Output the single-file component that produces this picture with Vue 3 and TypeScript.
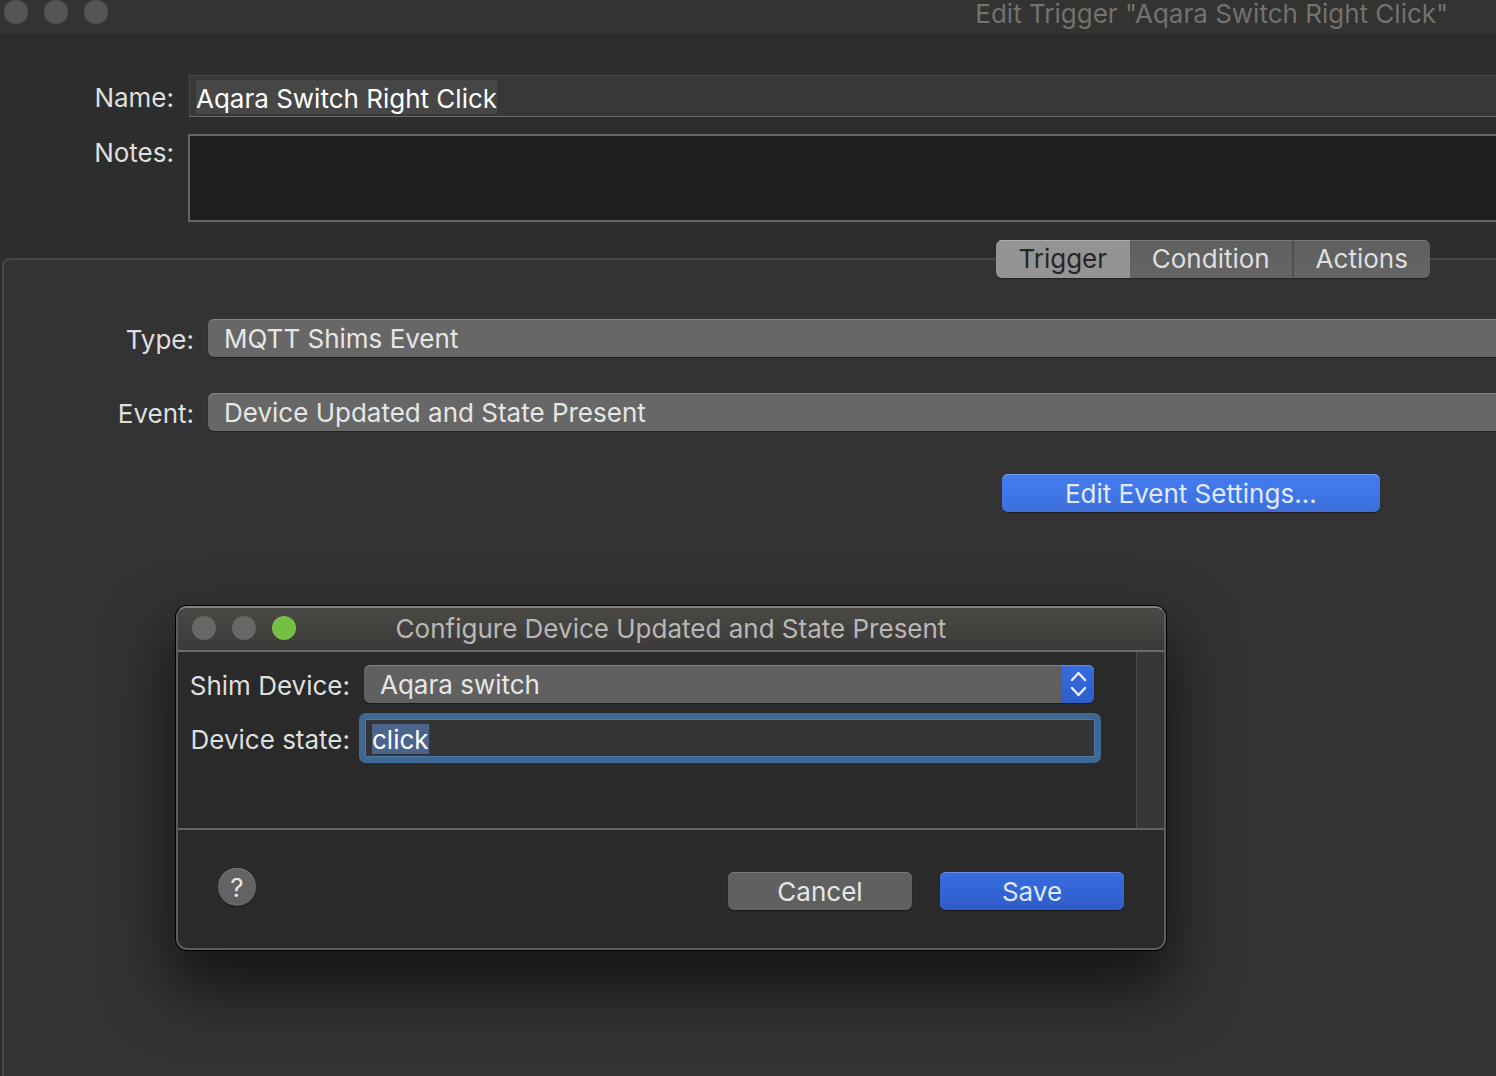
<script setup lang="ts">
import { ref } from 'vue'

type Tab = 'Trigger' | 'Condition' | 'Actions'

const tabs: Tab[] = ['Trigger', 'Condition', 'Actions']
const activeTab = ref<Tab>('Trigger')

const name = ref('Aqara Switch Right Click')
const notes = ref('')
const triggerType = ref('MQTT Shims Event')
const eventKind = ref('Device Updated and State Present')
const shimDevice = ref('Aqara switch')
const deviceState = ref('click')
</script>

<template>
  <div class="desktop">
    <main class="window">
      <header class="titlebar">
        <div class="lights">
          <span class="light"></span>
          <span class="light"></span>
          <span class="light"></span>
        </div>
        <h1 class="title">Edit Trigger "Aqara Switch Right Click"</h1>
      </header>

      <div class="general">
        <div class="general-row">
          <label class="label" for="name">Name:</label>
          <div class="name-field">
            <input id="name" v-model="name" class="marked" type="text" autocomplete="off" />
          </div>
        </div>
        <div class="general-row top">
          <label class="label" for="notes">Notes:</label>
          <textarea id="notes" v-model="notes" class="notes"></textarea>
        </div>
      </div>

      <div class="tabs" role="tablist">
        <button
          v-for="tab in tabs"
          :key="tab"
          type="button"
          role="tab"
          class="tab"
          :class="{ active: tab === activeTab }"
          :aria-selected="tab === activeTab"
          @click="activeTab = tab"
        >
          {{ tab }}
        </button>
      </div>

      <section class="group">
        <div class="group-row">
          <label class="label" for="type">Type:</label>
          <select id="type" v-model="triggerType" class="popup">
            <option>MQTT Shims Event</option>
          </select>
        </div>
        <div class="group-row">
          <label class="label" for="event">Event:</label>
          <select id="event" v-model="eventKind" class="popup">
            <option>Device Updated and State Present</option>
          </select>
        </div>
        <button type="button" class="button settings">Edit Event Settings...</button>
      </section>
    </main>

    <div class="dialog" role="dialog" aria-labelledby="dialog-title">
      <header class="dialog-bar">
        <div class="lights">
          <span class="light"></span>
          <span class="light"></span>
          <span class="light green"></span>
        </div>
        <h2 id="dialog-title" class="title">Configure Device Updated and State Present</h2>
      </header>

      <div class="dialog-body">
        <div class="fields">
          <div class="field-row">
            <label class="label" for="device">Shim Device:</label>
            <div class="picker">
              <select id="device" v-model="shimDevice" class="popup">
                <option>Aqara switch</option>
              </select>
              <svg class="stepper" viewBox="0 0 32 38" aria-hidden="true">
                <path d="M10 15 16.500 8 23 15M10 23 16.500 30 23 23" />
              </svg>
            </div>
          </div>
          <div class="field-row">
            <label class="label" for="state">Device state:</label>
            <div class="state-field">
              <input id="state" v-model="deviceState" class="marked" type="text" autocomplete="off" />
            </div>
          </div>
        </div>
        <div class="scroll-track"></div>
      </div>

      <footer class="dialog-footer">
        <button type="button" class="help" aria-label="Help">?</button>
        <div class="dialog-actions">
          <button type="button" class="button cancel">Cancel</button>
          <button type="button" class="button save">Save</button>
        </div>
      </footer>
    </div>
  </div>
</template>

<style>
body {
  background: #2d2d2d;
}
</style>

<style scoped>
* {
  box-sizing: border-box;
}

.desktop {
  position: relative;
  min-height: 100vh;
  overflow: hidden;
  display: flex;
  font-family: Inter, 'Liberation Sans', sans-serif;
  font-size: 26px;
  line-height: 30px;
  color: #dfdfdf;
}

button,
input,
select,
textarea {
  margin: 0;
  border: 0;
  padding: 0;
  font: inherit;
  color: inherit;
  outline: none;
}

/* The trigger window runs past the right edge of the screen. */
.window {
  flex: none;
  width: 162vw;
  display: flex;
  flex-direction: column;
  background: #2d2d2d;
}

.titlebar {
  position: relative;
  height: 34px;
  display: flex;
  justify-content: center;
  background: #333331;
  color: #72726f;
}

.title {
  margin: 0;
  font-size: 26px;
  line-height: 28px;
  font-weight: 400;
}

.lights {
  position: absolute;
  left: 4px;
  top: 0;
  display: flex;
  gap: 16px;
}

.light {
  width: 24px;
  height: 24px;
  border-radius: 50%;
  background: #555553;
}

.general {
  display: flex;
  flex-direction: column;
  gap: 17px;
  padding: 41px 40px 18px 0;
}

.general-row {
  display: flex;
  align-items: center;
}

.general-row.top {
  align-items: flex-start;
}

.label {
  padding-top: 4px;
  text-align: right;
}

.general .label {
  width: 188px;
  padding-right: 14px;
}

.name-field {
  flex: 1;
  height: 42px;
  display: flex;
  align-items: center;
  margin-left: 1px;
  padding: 2px 6px 0;
  border: 1px solid #484848;
  border-bottom-color: #6c6c6c;
  background: #383838;
}

.marked {
  field-sizing: content;
  padding-top: 2px;
  color: #fff;
}

.name-field .marked {
  height: 34px;
  background: #464646;
}

.notes {
  flex: 1;
  height: 88px;
  border: 2px solid #646464;
  background: #1e1e1e;
  resize: none;
}

.tabs {
  position: relative;
  z-index: 1;
  align-self: center;
  height: 38px;
  display: flex;
  margin-left: 2px;
  border-radius: 6px;
  overflow: hidden;
  box-shadow: 0 1px 1px rgba(0, 0, 0, 0.3);
}

.tab {
  width: 136px;
  background: linear-gradient(#5f5f5f, #656565);
  box-shadow: inset 0 1px #7b7b7b;
}

.tab:first-child {
  width: 134px;
}

.tab:nth-child(2) {
  width: 164px;
  border-right: 2px solid #505050;
}

.tab.active {
  background: #949494;
  box-shadow: inset 0 1px #acacac;
  color: #262626;
}

.group {
  flex: 1;
  display: flex;
  flex-direction: column;
  gap: 36px;
  margin: -20px 0 0 2px;
  padding: 59px 44px 0 0;
  border: 2px solid #464646;
  border-bottom: 0;
  border-radius: 8px 8px 0 0;
  background: #333;
}

.group-row {
  display: flex;
  align-items: center;
}

.group .label {
  width: 204px;
  padding-right: 14px;
}

.popup {
  appearance: none;
  flex: 1;
  height: 38px;
  padding: 2px 16px 0;
  border-radius: 6px;
  background: #676767;
  box-shadow:
    inset 0 1px #838383,
    0 1px 1px rgba(0, 0, 0, 0.4);
  color: #e6e6e6;
}

.button {
  width: 184px;
  height: 38px;
  padding-top: 2px;
  border-radius: 6px;
  color: #e6e6e6;
}

.settings {
  align-self: center;
  width: 378px;
  margin-top: 7px;
  background: linear-gradient(#447df0, #3c6fdc);
  box-shadow:
    inset 0 1px #6f9bf2,
    0 1px 1px rgba(0, 0, 0, 0.4);
  color: #e1e9fb;
}

.dialog {
  position: absolute;
  z-index: 2;
  left: 176px;
  top: 606px;
  width: 990px;
  border: 2px solid #5c5c5c;
  border-top-color: #858482;
  border-radius: 11px;
  background: #2a2a2a;
  box-shadow:
    0 0 0 1px #000,
    0 32px 64px 6px rgba(0, 0, 0, 0.6);
}

.dialog-bar {
  position: relative;
  height: 44px;
  display: flex;
  justify-content: center;
  align-items: center;
  border-bottom: 2px solid #6b6b6a;
  border-radius: 8px 8px 0 0;
  background: linear-gradient(#4a4946, #3b3a38);
  color: #b9b8b6;
}

.dialog-bar .lights {
  left: 14px;
  top: 8px;
}

.dialog-bar .light {
  background: #696866;
}

.dialog-bar .light.green {
  background: #75c044;
}

.dialog-body {
  height: 178px;
  display: flex;
  border-bottom: 2px solid #646464;
}

.fields {
  flex: 1;
  display: flex;
  flex-direction: column;
  gap: 10px;
  padding: 13px 35px 0 0;
}

.field-row {
  display: flex;
  align-items: center;
}

.fields .label {
  width: 181px;
  padding-right: 9px;
}

.picker {
  position: relative;
  flex: 1;
  display: flex;
  margin: 0 7px 0 5px;
}

.picker .popup {
  background: #606060;
}

.stepper {
  position: absolute;
  right: 0;
  top: 0;
  width: 32px;
  height: 38px;
  border-radius: 0 6px 6px 0;
  background: linear-gradient(#376de0, #2f5cc8);
  box-shadow: inset 0 1px #5f8be6;
  pointer-events: none;
}

.stepper path {
  fill: none;
  stroke: #e6ecfa;
  stroke-width: 2.5;
  stroke-linecap: round;
  stroke-linejoin: round;
}

.state-field {
  flex: 1;
  height: 50px;
  display: flex;
  align-items: center;
  padding: 2px 7px 0;
  border: 6px solid #3f6893;
  border-radius: 7px;
  background: #353535;
  box-shadow: inset 0 0 0 1px #4c7cab;
}

.state-field .marked {
  height: 30px;
  background: #4a648c;
}

.scroll-track {
  width: 28px;
  border-left: 1px solid #4b4b4b;
  background: #363636;
}

.dialog-footer {
  height: 118px;
  display: flex;
  justify-content: space-between;
  align-items: flex-start;
  padding: 38px 40px 0;
}

.help {
  width: 38px;
  height: 38px;
  padding-top: 2px;
  border-radius: 50%;
  background: #636363;
  box-shadow:
    inset 0 1px #7c7c7c,
    0 1px 1px rgba(0, 0, 0, 0.4);
  color: #e6e6e6;
}

.dialog-actions {
  display: flex;
  gap: 28px;
  padding-top: 4px;
}

.cancel {
  background: #606060;
  box-shadow:
    inset 0 1px #7b7b7b,
    0 1px 1px rgba(0, 0, 0, 0.4);
}

.save {
  background: linear-gradient(#376de0, #2f5cc8);
  box-shadow:
    inset 0 1px #6691ea,
    0 1px 1px rgba(0, 0, 0, 0.4);
  color: #dfe7f9;
}
</style>
